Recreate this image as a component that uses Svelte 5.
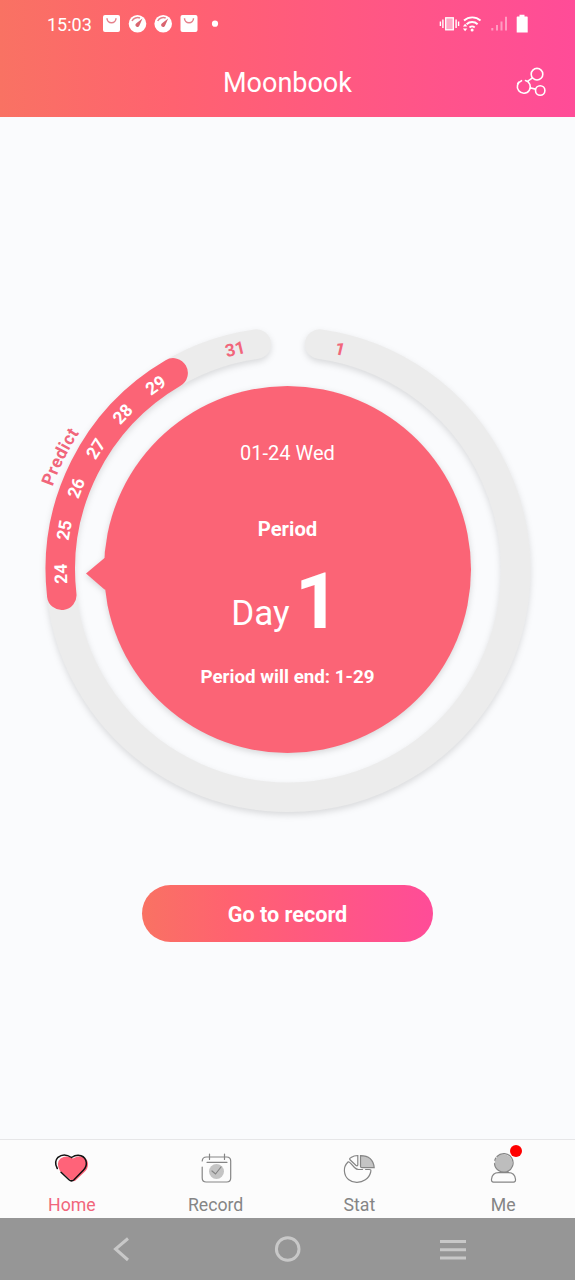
<script lang="ts">
    const days = [24, 25, 26, 27, 28, 29, 31, 1];
    const step = 11.1;
    const tabs = ["Home", "Record", "Stat", "Me"];
    const active = "Home";

    // angles are clockwise degrees from the top of the ring
    function point(angle: number, r: number) {
        const a = (angle * Math.PI) / 180;
        return `${(Math.sin(a) * r).toFixed(2)} ${(-Math.cos(a) * r).toFixed(2)}`;
    }

    function arc(from: number, to: number, r: number) {
        const large = to - from > 180 ? 1 : 0;
        return `M${point(from, r)}A${r} ${r} 0 ${large} 1 ${point(to, r)}`;
    }

    function dayAngle(day: number) {
        if (day === 1) return 13.4;
        return -91.1 + (day - 24) * step;
    }
</script>

<div class="screen">
    <header>
        <div class="status">
            <span class="time">15:03</span>
            <svg class="notices" width="120" height="20" viewBox="0 0 120 20">
                <g fill="#fff">
                    <rect x="0" y="1" width="17" height="17" rx="2" />
                    <circle cx="34.5" cy="9.7" r="8.8" />
                    <circle cx="60.2" cy="9.7" r="8.8" />
                    <rect x="77.5" y="1" width="17" height="17" rx="2" />
                    <circle cx="112" cy="9.7" r="3.1" />
                </g>
                <g fill="none" stroke="#e5808b" stroke-width="1.5">
                    <path d="M4 4.2a4.5 4.5 0 0 0 9 0M81.5 4.2a4.5 4.5 0 0 0 9 0" />
                    <path d="M29 7a6.3 6.3 0 0 1 8-3M54.7 7a6.3 6.3 0 0 1 8-3" />
                </g>
                <path d="M39.5 4.5l-3.2 7.2a2 2 0 1 1-2.9-2.4zM65.2 4.5l-3.2 7.2a2 2 0 1 1-2.9-2.4z" fill="#d9646f" />
            </svg>
            <svg class="signals" width="92" height="22" viewBox="0 0 92 22">
                <rect x="6.7" y="4.8" width="7.6" height="12" fill="#ffa5c4" stroke="#fff" stroke-width="1.3" />
                <path d="M3.9 6.5v8.5M17.1 6.5v8.5M1.4 8.5v4.5M19.6 8.5v4.5" stroke="#fff" stroke-width="1.4" />
                <g fill="none" stroke="#fff" stroke-width="1.9">
                    <path d="M25 7.5a12.5 12.5 0 0 1 16.5 0M27.6 11.2a8 8 0 0 1 11 0M30.5 14.5a4 4 0 0 1 5.2 0" />
                </g>
                <circle cx="33.1" cy="17" r="1.5" fill="#fff" />
                <path d="M26.1 10.8l2.2 2.7h-4.400zM26.1 18.3l-2.2-2.700h4.400z" fill="#fff" />
                <path d="M53.300 15v2.500M58 12v5.500M62.500 8.500v9M67 3.800v13.700" stroke="#ff9cc2" stroke-width="2" />
                <path d="M80.500 3.500V1.700h5v1.800H88q.7 0 .7.700v15.200H77.700V4.200q0-.7.700-.7z" fill="#fff" />
            </svg>
        </div>
        <div class="title">
            <h1>Moonbook</h1>
            <svg class="share" width="32" height="32" viewBox="0 0 32 32" fill="none" stroke="#fff" stroke-width="1.6" stroke-linecap="round">
                <circle cx="22" cy="8.2" r="5.8" />
                <circle cx="25.2" cy="24.5" r="4.7" />
                <path d="M6.500 14.700a6.500 6.500 0 1 0 4-.2M2.700 17.500a6.500 6.500 0 0 1 1-1.300M12.500 15.300l5-3.400M15 21.800l5.400 1.300" />
            </svg>
        </div>
    </header>

    <main>
        <svg class="cycle" width="535" height="500" viewBox="-267.5 -250.5 535 500">
            <defs>
                <path id="outer" d={arc(-90, -30, 249)} />
            </defs>
            <g transform="translate(.5)">
                <path class="ring" d={arc(8, 352, 227.7)} />
                <path class="period" d={arc(-96.5, -30.3, 227.7)} />
            </g>
            <g class="disc">
                <circle r="183.5" />
                <path d="M-201.5 4L-183-11.5H-178V20H-183z" />
            </g>
            {#each days as day}
                {@const angle = dayAngle(day)}
                <text class="day" class:plain={day === 31 || day === 1} transform="translate({point(angle, 220.5)}) rotate({angle})">{day}</text>
            {/each}
            <text class="predict"><textPath href="#outer" startOffset="44%">Predict</textPath></text>
            <text class="date" y="-110">01-24 Wed</text>
            <text class="label" y="-34">Period</text>
            <text class="word" x="-27" y="55.5">Day</text>
            <text class="count" x="30" y="58.5">1</text>
            <text class="ends" y="113">Period will end: 1-29</text>
        </svg>
        <button>Go to record</button>
    </main>

    <nav class="tabs">
        {#each tabs as tab}
            <div class="tab" class:active={tab === active}>
                <svg width="40" height="36" viewBox="0 0 40 36" fill="none" stroke="#858585" stroke-width="1.2" stroke-linecap="round">
                    {#if tab === "Home"}
                        <path d="M21 8.5c6-4 15-2 15 5.500q0 4.500-3 7.500l-9.500 9q-2 1.500-4 0L8 21Q3.500 13 8.500 8.500 14.500 4.500 21 8.500z" fill="#ff6379" stroke="none" />
                        <path d="M5.300 18.500Q1.500 12 6 7.300C10 4 15 4.500 19.500 7.500 26 3 33.500 5.500 34.300 12.500q.4 4.500-3 7.700L22 29.700q-2.500 2.300-5 0L9 22.200" stroke="#111" stroke-width="1.5" />
                    {:else if tab === "Record"}
                        <circle cx="20.5" cy="21.5" r="7.5" fill="#c4c4c4" stroke="none" />
                        <path d="M6.200 17v11q0 4 4 4h20.500q4 0 4-4V11q0-4-4-4H10.500q-4 0-4.300 4M13.500 4v5.500M28.500 4v5.500M11 12.300h20" />
                        <path d="M16 21l3.500 3 5.500-7" />
                    {:else if tab === "Stat"}
                        <path d="M21.500 5.700q12.500 0 13.700 12H23q-1.500 0-1.500-1.500z" fill="#c4c4c4" />
                        <path d="M18.800 5.500V15q-.5 1.500-2 .3L11 9.800Q10 8.500 12 7.500q3-2 6.800-2zM9 12q-4 4-3.600 9c1 15 23 15 26.300 1 .6-2.500 0-2.500-1.500-2.500h-3.600M23.500 19.500h-4q-2 0-4-2l-4-4.300Q10 11.500 9 12" />
                    {:else}
                        <circle cx="20.5" cy="13.3" r="9" fill="#bdbdbd" stroke="none" />
                        <path d="M14 6.500a9.300 9.300 0 1 1-2.500 7M11.800 10.300q.2-1 1-2.300M8.500 29.200c.5-4 3-6.500 7-6.500h10c4 0 6.500 2.500 7 6.500q.2 3-2 3h-20q-2.200 0-2-3z" />
                    {/if}
                </svg>
                <span>{tab}</span>
                {#if tab === "Me"}
                    <i class="badge"></i>
                {/if}
            </div>
        {/each}
    </nav>

    <footer>
        <svg width="575" height="62" viewBox="0 0 575 62" fill="none" stroke="#c8c8c8" stroke-width="3">
            <path d="M128 20.5L115.5 31 128 42" />
            <circle cx="287.7" cy="31" r="11.3" />
            <path d="M440 23.5h26M440 31.7h26M440 40h26" />
        </svg>
    </footer>
</div>

<style>
    :global(body) {
        margin: 0;
    }

    .screen {
        width: 575px;
        height: 1280px;
        display: flex;
        flex-direction: column;
        background: #fafbfd;
        font-family: Roboto, sans-serif;
    }

    header {
        height: 117px;
        flex: none;
        color: #fff;
        background: linear-gradient(90deg, #f97263, #ff6270 30%, #ff4c98);
    }

    .status {
        height: 47px;
        display: flex;
        align-items: center;
        padding: 0 44px 0 47px;
    }

    .time {
        width: 56px;
        font-size: 18px;
        padding-top: 1px;
    }

    .signals {
        margin-left: auto;
    }

    .title {
        display: grid;
        grid-template-columns: 60px 1fr 60px;
        align-items: center;
        height: 70px;
    }

    h1 {
        grid-column: 2;
        margin: 0;
        padding-top: 2px;
        text-align: center;
        font-size: 27px;
        font-weight: 400;
    }

    main {
        flex: 1;
        display: flex;
        flex-direction: column;
        align-items: center;
        padding-top: 202px;
        gap: 66px;
    }

    .cycle {
        flex: none;
        overflow: visible;
    }

    .cycle text {
        fill: #fff;
        text-anchor: middle;
    }

    .ring,
    .period {
        fill: none;
        stroke: #ececec;
        stroke-width: 29.5;
        stroke-linecap: round;
    }

    .ring {
        filter: drop-shadow(0 3px 3px rgba(0, 0, 0, 0.13));
    }

    .period {
        stroke: #fb6476;
    }

    .disc {
        fill: #fb6476;
        filter: drop-shadow(0 2px 3px rgba(0, 0, 0, 0.15));
    }

    .day {
        font-size: 17.5px;
        font-weight: 700;
    }

    .cycle .plain,
    .cycle .predict {
        fill: #f1667b;
    }

    .predict {
        font-size: 17.5px;
        font-weight: 700;
        letter-spacing: 0.6px;
    }

    .date {
        font-size: 20px;
    }

    .label {
        font-size: 20.3px;
        font-weight: 700;
    }

    .word {
        font-size: 35px;
    }

    .count {
        font-size: 78px;
        font-weight: 700;
    }

    .ends {
        font-size: 18.8px;
        font-weight: 700;
    }

    button {
        width: 291px;
        height: 57px;
        flex: none;
        padding: 2px 0 0;
        border: 0;
        border-radius: 29px;
        color: #fff;
        background: linear-gradient(90deg, #f97263, #ff6270 30%, #ff4c98);
        font: 700 21.6px Roboto, sans-serif;
    }

    .tabs {
        height: 79px;
        flex: none;
        box-sizing: border-box;
        display: grid;
        grid-template-columns: repeat(4, 1fr);
        border-top: 1px solid #e6e6e8;
        background: #fcfcfc;
    }

    .tab {
        position: relative;
        display: flex;
        flex-direction: column;
        align-items: center;
        padding-top: 10px;
        color: #858585;
        font-size: 17.7px;
    }

    .tab span {
        margin-top: 9px;
        line-height: 21px;
    }

    .active {
        color: #f1667b;
    }

    .badge {
        position: absolute;
        top: 5px;
        left: 79px;
        width: 12px;
        height: 12px;
        border-radius: 50%;
        background: #f00;
    }

    footer {
        height: 62px;
        flex: none;
        background: #969696;
    }
</style>
